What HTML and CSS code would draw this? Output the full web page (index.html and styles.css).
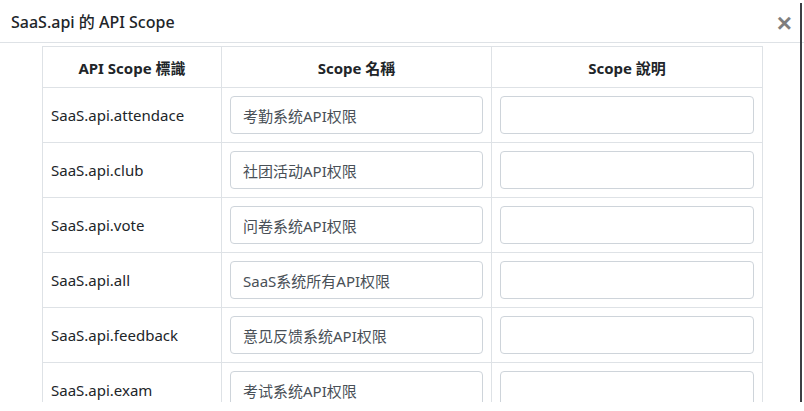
FILE: index.html
```html
<!DOCTYPE html>
<html lang="zh-Hant">
<head>
    <meta charset="UTF-8">
    <meta name="viewport" content="width=device-width, initial-scale=1.0">
    <title>SaaS.api 的 API Scope</title>
    <link rel="stylesheet" href="styles.css">
</head>
<body>
    <div class="modal">
        <div class="modal-header">
            <h5 class="modal-title">SaaS.api 的 API Scope</h5>
            <button class="close" type="button">&times;</button>
        </div>
        <div class="modal-body">
            <table class="scope-table">
                <colgroup>
                    <col class="col-id">
                    <col class="col-name">
                    <col class="col-desc">
                </colgroup>
                <thead>
                    <tr>
                        <th>API Scope 標識</th>
                        <th>Scope 名稱</th>
                        <th>Scope 說明</th>
                    </tr>
                </thead>
                <tbody>
                    <tr>
                        <td>SaaS.api.attendace</td>
                        <td><input type="text" class="form-control" value="考勤系统API权限"></td>
                        <td><input type="text" class="form-control" value=""></td>
                    </tr>
                    <tr>
                        <td>SaaS.api.club</td>
                        <td><input type="text" class="form-control" value="社团活动API权限"></td>
                        <td><input type="text" class="form-control" value=""></td>
                    </tr>
                    <tr>
                        <td>SaaS.api.vote</td>
                        <td><input type="text" class="form-control" value="问卷系统API权限"></td>
                        <td><input type="text" class="form-control" value=""></td>
                    </tr>
                    <tr>
                        <td>SaaS.api.all</td>
                        <td><input type="text" class="form-control" value="SaaS系统所有API权限"></td>
                        <td><input type="text" class="form-control" value=""></td>
                    </tr>
                    <tr>
                        <td>SaaS.api.feedback</td>
                        <td><input type="text" class="form-control" value="意见反馈系统API权限"></td>
                        <td><input type="text" class="form-control" value=""></td>
                    </tr>
                    <tr>
                        <td>SaaS.api.exam</td>
                        <td><input type="text" class="form-control" value="考试系统API权限"></td>
                        <td><input type="text" class="form-control" value=""></td>
                    </tr>
                </tbody>
            </table>
        </div>
    </div>
</body>
</html>
```

FILE: styles.css
```css
body {
    font-family: "Noto Sans", "Noto Sans CJK TC", sans-serif;
    background-color: #fff;
    color: #212529;
    margin: 0;
}

.modal {
    position: relative;
    width: 804px;
    height: 411px;
    overflow: hidden;
}

.modal::after {
    content: "";
    position: absolute;
    top: 3px;
    right: 2px;
    width: 2px;
    height: 399px;
    background-color: #3d3f44;
}

.modal-header {
    display: flex;
    align-items: center;
    justify-content: space-between;
    height: 43px;
    padding: 0 12px 0 11px;
    border-bottom: 1px solid #dee2e6;
    box-sizing: border-box;
}

.modal-title {
    margin: 0;
    font-size: 16px;
    font-weight: 500;
    color: #212529;
}

.close {
    background: none;
    border: none;
    padding: 0;
    margin-top: 4px;
    font-family: "Liberation Sans", sans-serif;
    font-size: 26px;
    font-weight: bold;
    line-height: 1;
    color: #000;
    opacity: 0.5;
    cursor: pointer;
}

.modal-body {
    height: 359px;
    padding: 3px 0 0 42px;
    overflow: hidden;
    box-sizing: border-box;
}

.scope-table {
    width: 720px;
    border-collapse: collapse;
    table-layout: fixed;
    font-size: 15px;
}

.col-id { width: 179px; }
.col-name { width: 270px; }
.col-desc { width: 271px; }

.scope-table th,
.scope-table td {
    border: 1px solid #dee2e6;
    padding: 8px;
    text-align: left;
}

.scope-table th {
    height: 41px;
    text-align: center;
    font-weight: bold;
    box-sizing: border-box;
}

.scope-table td {
    height: 55px;
    box-sizing: border-box;
}

.scope-table td:first-child {
    padding-left: 8px;
}

.form-control {
    display: block;
    width: 100%;
    height: 38px;
    padding: 6px 12px;
    font-family: inherit;
    font-size: 15px;
    color: #495057;
    background-color: #fff;
    border: 1px solid #ced4da;
    border-radius: 4px;
    box-sizing: border-box;
    outline: none;
}
```
